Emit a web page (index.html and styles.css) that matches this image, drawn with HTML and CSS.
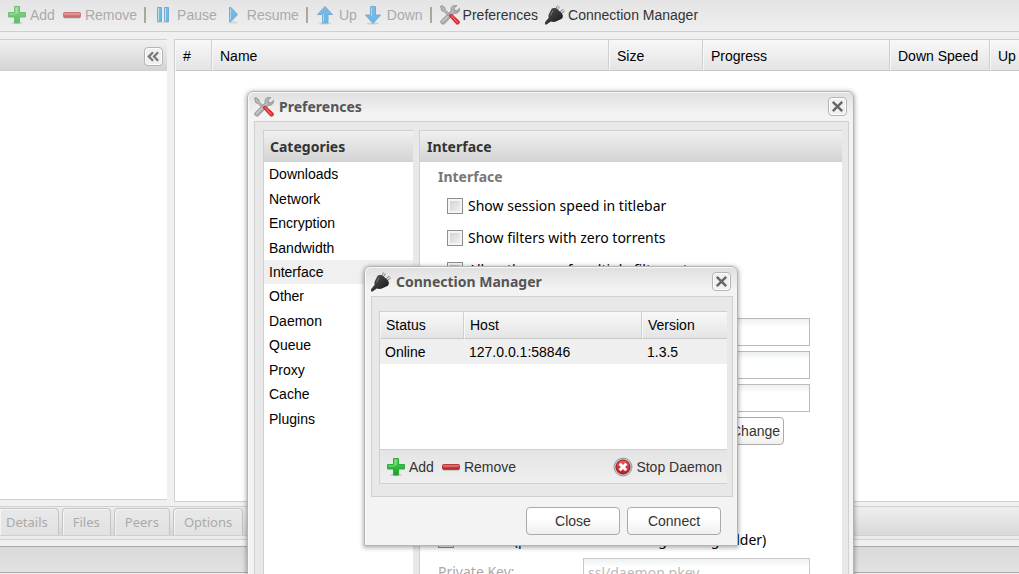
FILE: index.html
```html
<!DOCTYPE html>
<html lang="en">
<head>
    <meta charset="UTF-8">
    <meta name="viewport" content="width=device-width, initial-scale=1.0">
    <title>Deluge: Web UI</title>
    <link rel="stylesheet" href="styles.css">
</head>
<body>
    <!-- Shared icons -->
    <svg class="sprite" width="0" height="0" aria-hidden="true">
        <defs>
            <linearGradient id="green" x1="0" y1="0" x2="0" y2="1"><stop offset="0" stop-color="#5cd45c"/><stop offset="1" stop-color="#0fa31e"/></linearGradient>
            <linearGradient id="red" x1="0" y1="0" x2="0" y2="1"><stop offset="0" stop-color="#e2605c"/><stop offset="1" stop-color="#b01d22"/></linearGradient>
            <linearGradient id="blue" x1="0" y1="0" x2="0" y2="1"><stop offset="0" stop-color="#4aa3e0"/><stop offset="1" stop-color="#1f9be8"/></linearGradient>
            <linearGradient id="metal" x1="0" y1="0" x2="1" y2="1"><stop offset="0" stop-color="#cfcfcf"/><stop offset="1" stop-color="#8d8d8d"/></linearGradient>
            <linearGradient id="black" x1="0" y1="0" x2="1" y2="1"><stop offset="0" stop-color="#555"/><stop offset="1" stop-color="#151515"/></linearGradient>
        </defs>
        <symbol id="icon-add" viewBox="0 0 20 20">
            <ellipse cx="10" cy="18" rx="6" ry="1.2" fill="#000" opacity=".18"/>
            <path d="M7.5 1.5h5v6h6v4.500h-6v6h-5v-6h-6V7.500h6z" fill="url(#green)" stroke="#2faa3c"/>
            <path d="M8.500 2.500h2v6h-2zM2.500 8.500h6v1h-6z" fill="#9be89b" opacity=".7"/>
        </symbol>
        <symbol id="icon-remove" viewBox="0 0 20 20">
            <rect x="1.500" y="7.500" width="17" height="5" rx="1" fill="url(#red)" stroke="#b83a3d"/>
            <path d="M2.500 8.500h15v1h-15z" fill="#f09a96" opacity=".7"/>
            <path d="M2 13.500h16" stroke="#000" opacity=".12"/>
        </symbol>
        <symbol id="icon-pause" viewBox="0 0 20 20">
            <path d="M3.500 2.500h4v14h-4zM10.500 2.500h4v14h-4z" fill="url(#blue)" stroke="#3a8bc8"/>
            <path d="M4 3h1v13H4zM11 3h1v13h-1z" fill="#a8dcff"/>
            <path d="M3 17.500h12" stroke="#000" opacity=".15"/>
        </symbol>
        <symbol id="icon-resume" viewBox="0 0 20 20">
            <ellipse cx="9" cy="17.500" rx="5" ry="1" fill="#000" opacity=".15"/>
            <path d="M5.500 2.500h1.500l6.500 7-6.500 7H5.500z" fill="url(#blue)" stroke="#3a8bc8" stroke-linejoin="round"/>
            <path d="M6.500 4v11" stroke="#8fcdf5"/>
        </symbol>
        <symbol id="icon-up" viewBox="0 0 20 20">
            <ellipse cx="9" cy="18.500" rx="6" ry="1" fill="#000" opacity=".18"/>
            <path d="M9 1.500l7.500 8h-4.500v8.500H6.500V9.500h-5z" fill="url(#blue)" stroke="#3a8bc8" stroke-linejoin="round"/>
            <path d="M7.500 9v8" stroke="#8fcdf5"/>
        </symbol>
        <symbol id="icon-down" viewBox="0 0 20 20">
            <ellipse cx="9" cy="18.500" rx="6" ry="1" fill="#000" opacity=".18"/>
            <path d="M6.500 1.500h5v8.500h5L9 18.500 1.500 10h5z" fill="url(#blue)" stroke="#3a8bc8" stroke-linejoin="round"/>
            <path d="M7.500 2.500V11" stroke="#8fcdf5"/>
        </symbol>
        <symbol id="icon-tools" viewBox="0 0 20 20">
            <path d="M.5 1.200L1.800.500 5 2.800 5.200 4.800 11 10.500 9.500 12 3.800 6.200 2 6z" fill="#b9b9b9" stroke="#8a8a8a" stroke-width=".8"/>
            <path d="M13 .8c1.200-.6 2.800-.6 4-.2l-2.800 2.600.5 2.200 2.200.4L19.500 3.300c.5 3.200-1.800 5.400-5 5L4.500 18.700C3 20 0 18.500.7 16L11.200 5.800C10.600 3.500 11.200 1.700 13 .8z" fill="url(#metal)" stroke="#8f8f8f" stroke-width=".8"/>
            <path d="M2.300 17L13 6.500" stroke="#dcdcdc"/>
            <path d="M8.800 10.600l2.200-1.900 7.800 7c1.200 1.400 1 3.300-1.300 3.600-.6 0-1.200-.3-1.600-.8z" fill="#dd3034" stroke="#c43034" stroke-width=".8"/>
            <path d="M11 10.500l6.500 7" stroke="#f28a88"/>
        </symbol>
        <symbol id="icon-plug" viewBox="0 0 20 20">
            <path d="M11 5.500l2.500-4.500M14.500 8.500l4.500-3.500" stroke="#888" stroke-width="3"/>
            <path d="M11 5.500l2.500-4.500M14.500 8.500l4.500-3.500" stroke="#dedede" stroke-width="1.400"/>
            <path d="M6.800 3.600c1.600-1 4.200-.6 5.800.8l4 3.600c1.700 1.700 1.700 4.200.2 5.700l-5.300 2.600c-2 .9-4.300.7-5.700.2L1.500 19.500H0v-2.200l3.700-4.600c-.5-1.700-.1-3 .6-4.500z" fill="url(#black)"/>
            <path d="M5.500 10.500l2.500-5" stroke="#777"/>
        </symbol>
        <symbol id="icon-stop" viewBox="0 0 20 20">
            <circle cx="10" cy="10" r="9" fill="#c4c4c4" stroke="#9e9e9e"/>
            <circle cx="10" cy="10" r="7" fill="url(#red)" stroke="#a01820"/>
            <path d="M6.700 6.700l6.600 6.600M13.300 6.700l-6.600 6.600" stroke="#fff" stroke-width="3"/>
        </symbol>
        <symbol id="icon-close" viewBox="0 0 16 16">
            <path d="M3 3l10 10M13 3L3 13" stroke="#666" stroke-width="2.600"/>
        </symbol>
        <symbol id="icon-collapse" viewBox="0 0 16 16">
            <path d="M7.500 3.500L3 8l4.500 4.500M13 3.500L8.500 8l4.500 4.500" fill="none" stroke="#777" stroke-width="2.400"/>
        </symbol>
    </svg>

    <div class="desktop">
        <div class="toolbar">
            <button class="tool" disabled><svg><use href="#icon-add"/></svg>Add</button>
            <button class="tool" disabled><svg><use href="#icon-remove"/></svg>Remove</button>
            <span class="separator"></span>
            <button class="tool" disabled><svg><use href="#icon-pause"/></svg>Pause</button>
            <button class="tool" disabled><svg><use href="#icon-resume"/></svg>Resume</button>
            <span class="separator"></span>
            <button class="tool" disabled><svg><use href="#icon-up"/></svg>Up</button>
            <button class="tool" disabled><svg><use href="#icon-down"/></svg>Down</button>
            <span class="separator"></span>
            <button class="tool"><svg><use href="#icon-tools"/></svg>Preferences</button>
            <button class="tool"><svg><use href="#icon-plug"/></svg>Connection Manager</button>
        </div>

        <div class="main">
            <div class="sidebar">
                <div class="panel-header">
                    <button class="mini" aria-label="Collapse"><svg><use href="#icon-collapse"/></svg></button>
                </div>
            </div>
            <div class="torrents">
                <table class="grid torrent-grid">
                    <colgroup>
                        <col class="col-number"><col class="col-name"><col class="col-size">
                        <col class="col-progress"><col class="col-speed"><col>
                    </colgroup>
                    <thead>
                        <tr><th>#</th><th>Name</th><th>Size</th><th>Progress</th><th>Down Speed</th><th>Up</th></tr>
                    </thead>
                </table>
            </div>
        </div>

        <div class="details">
            <div class="tabs">
                <button class="tab" disabled>Details</button>
                <button class="tab" disabled>Files</button>
                <button class="tab" disabled>Peers</button>
                <button class="tab" disabled>Options</button>
            </div>
        </div>
        <div class="statusbar"></div>

        <!-- Preferences window -->
        <div class="window preferences">
            <div class="window-header">
                <svg><use href="#icon-tools"/></svg>
                <h2>Preferences</h2>
                <button class="mini" aria-label="Close"><svg><use href="#icon-close"/></svg></button>
            </div>
            <div class="window-body preferences-body">
                <div class="panel categories">
                    <h3 class="panel-header">Categories</h3>
                    <ul class="category-list">
                        <li>Downloads</li>
                        <li>Network</li>
                        <li>Encryption</li>
                        <li>Bandwidth</li>
                        <li class="selected">Interface</li>
                        <li>Other</li>
                        <li>Daemon</li>
                        <li>Queue</li>
                        <li>Proxy</li>
                        <li>Cache</li>
                        <li>Plugins</li>
                    </ul>
                </div>
                <div class="panel page">
                    <h3 class="panel-header">Interface</h3>
                    <form class="page-form">
                        <fieldset class="options">
                            <legend>Interface</legend>
                            <label class="check"><input type="checkbox">Show session speed in titlebar</label>
                            <label class="check"><input type="checkbox">Show filters with zero torrents</label>
                            <label class="check"><input type="checkbox" checked>Allow the use of multiple filters at once</label>
                        </fieldset>
                        <fieldset class="password">
                            <input class="text" type="password" aria-label="Old Password">
                            <input class="text" type="password" aria-label="New Password">
                            <input class="text" type="password" aria-label="Confirm Password">
                            <button class="button change" type="button">Change</button>
                        </fieldset>
                        <fieldset class="server">
                            <label class="check"><input type="checkbox">Use SSL (paths relative to Deluge config folder)</label>
                            <div class="field">
                                <label for="pkey">Private Key:</label>
                                <input class="text" type="text" id="pkey" value="ssl/daemon.pkey" disabled>
                            </div>
                        </fieldset>
                    </form>
                </div>
            </div>
        </div>

        <!-- Connection Manager window -->
        <div class="window connections">
            <div class="window-header">
                <svg><use href="#icon-plug"/></svg>
                <h2>Connection Manager</h2>
                <button class="mini" aria-label="Close"><svg><use href="#icon-close"/></svg></button>
            </div>
            <div class="window-body connections-body">
                <div class="panel hosts">
                    <table class="grid host-grid">
                        <colgroup><col class="col-status"><col class="col-host"><col></colgroup>
                        <thead>
                            <tr><th>Status</th><th>Host</th><th>Version</th></tr>
                        </thead>
                        <tbody>
                            <tr><td>Online</td><td>127.0.0.1:58846</td><td>1.3.5</td></tr>
                        </tbody>
                    </table>
                    <div class="host-tools">
                        <button class="tool"><svg><use href="#icon-add"/></svg>Add</button>
                        <button class="tool"><svg><use href="#icon-remove"/></svg>Remove</button>
                        <button class="tool last"><svg><use href="#icon-stop"/></svg>Stop Daemon</button>
                    </div>
                </div>
            </div>
            <div class="window-footer">
                <button class="button">Close</button>
                <button class="button">Connect</button>
            </div>
        </div>
    </div>
</body>
</html>
```
FILE: styles.css
```css
* {
    box-sizing: border-box;
}

body {
    margin: 0;
    font-family: "Liberation Sans", Arial, sans-serif;
    font-size: 14px;
    line-height: 16px;
    color: #000;
}

button, input {
    font: inherit;
}

svg {
    display: block;
    flex: none;
    width: 20px;
    height: 20px;
}

.sprite {
    position: absolute;
    width: 0;
    height: 0;
}

.desktop {
    position: relative;
    display: flex;
    flex-direction: column;
    height: 100vh;
    overflow: hidden;
    background: #f0f0f0;
}

/* toolbar */
.toolbar {
    display: flex;
    align-items: center;
    gap: 7px;
    height: 32px;
    padding: 0 7px 1px;
    border-bottom: 1px solid #d0d0d0;
    background: linear-gradient(#e4e4e4, #efefef);
}

.tool {
    display: flex;
    align-items: center;
    gap: 3px;
    padding: 0;
    border: 0;
    background: none;
    color: #333;
    white-space: nowrap;
}

.tool:disabled {
    color: #aaa;
}

.tool:disabled svg {
    opacity: 0.65;
}

.separator {
    width: 2px;
    height: 16px;
    margin-right: 1px;
    background: #aca899;
}

/* main area */
.main {
    display: flex;
    flex: 1;
    gap: 7px;
    min-height: 0;
    padding-top: 7px;
}

.sidebar {
    width: 167px;
    margin-bottom: 2px;
    border: solid #d0d0d0;
    border-width: 1px 0;
    background: #fff;
}

.panel-header {
    display: flex;
    align-items: center;
    height: 31px;
    margin: 0;
    padding: 2px 4px 0 6px;
    border-bottom: 1px solid #d0d0d0;
    background: linear-gradient(#f0f0f0, #d4d4d4);
    color: #333;
    font: bold 14px/18px "Noto Sans", Tahoma, sans-serif;
}

.mini {
    display: flex;
    align-items: center;
    justify-content: center;
    width: 19px;
    height: 19px;
    margin-left: auto;
    padding: 0;
    border: 1px solid #b4b4b4;
    border-radius: 4px;
    background: #f0f0f0;
    box-shadow: inset 0 0 0 1px #fff;
}

.mini svg {
    width: 15px;
    height: 15px;
}

.torrents {
    flex: 1;
    overflow: hidden;
    border: solid #d0d0d0;
    border-width: 1px 0 1px 1px;
    background: #fff;
}

.grid {
    table-layout: fixed;
    width: 100%;
    border-collapse: separate;
    border-spacing: 0;
}

.grid th {
    border-right: 1px solid #d0d0d0;
    border-bottom: 1px solid #c8c8c8;
    border-left: 1px solid #f8f8f8;
    background: linear-gradient(#f8f8f8, #e4e4e4);
    font-weight: normal;
    text-align: left;
    white-space: nowrap;
}

.grid th:last-child {
    border-right: 0;
}

.torrent-grid th {
    height: 31px;
    padding: 2px 0 0 7px;
}

.col-number {
    width: 37px;
}

.col-name {
    width: 397px;
}

.col-size {
    width: 94px;
}

.col-progress {
    width: 187px;
}

.col-speed {
    width: 100px;
}

/* details tabs and status bar */
.details {
    margin-top: 4px;
    padding-bottom: 3px;
    border: solid #d0d0d0;
    border-width: 1px 0;
    background: #ebebeb;
}

.tabs {
    display: flex;
    gap: 3px;
    padding-top: 1px;
    border-bottom: 1px solid #d0d0d0;
    background: linear-gradient(#eee, #d9d9d9);
}

.tab {
    height: 27px;
    padding: 0 10px;
    border: 1px solid #c4c4c4;
    border-bottom: 0;
    border-radius: 4px 4px 0 0;
    background: linear-gradient(#e8e8e8, #e2e2e2);
    box-shadow: inset 1px 1px #f4f4f4;
    color: #aaa;
    font: 13px/18px "Noto Sans", Tahoma, sans-serif;
}

.tab:first-child {
    padding-left: 6px;
    border-left: 0;
    border-top-left-radius: 0;
}

.statusbar {
    height: 27px;
    margin-top: 6px;
    margin-bottom: 1px;
    border: solid #aaa;
    border-width: 1px 0;
    background: linear-gradient(#d9d9d9, #e2e2e2);
}

/* windows */
.window {
    position: absolute;
    padding: 0 4px 0 6px;
    border: 1px solid #b4b4b4;
    border-radius: 6px 6px 0 0;
    background: linear-gradient(#dfdfdf, #f3f3f3 22px);
    box-shadow: inset 1px 1px #f8f8f8, 0 1px 4px 1px rgba(0, 0, 0, 0.3);
}

.window-header {
    display: flex;
    align-items: center;
    gap: 5px;
    height: 29px;
    padding-right: 2px;
}

.window-header h2 {
    margin: 0;
    color: #555;
    font: bold 14px/18px "Noto Sans", Tahoma, sans-serif;
}

.window-body {
    border: 1px solid #d0d0d0;
    background: #e8e8e8;
}

.panel {
    border: solid #d0d0d0;
    border-width: 1px 0 1px 1px;
    background: #fff;
}

.button {
    min-width: 94px;
    height: 28px;
    padding: 0 4px;
    border: 1px solid #aaa;
    border-radius: 4px;
    background: linear-gradient(#fff 40%, #efefef);
    color: #333;
}

/* preferences */
.preferences {
    top: 91px;
    left: 247px;
    width: 607px;
}

.preferences-body {
    display: flex;
    gap: 6px;
    min-height: 500px;
    padding: 8px 6px 8px 8px;
}

.categories {
    width: 150px;
}

.category-list {
    display: grid;
    grid-auto-rows: 1fr;
    height: 269px;
    margin: 0;
    padding: 0;
    list-style: none;
}

.category-list li {
    display: flex;
    align-items: center;
    padding-left: 5px;
}

.category-list .selected {
    background: #f0f0f0;
}

.page {
    flex: 1;
}

.page .panel-header {
    padding-left: 7px;
}

.page-form {
    padding: 6px 18px;
    font-family: "Noto Sans", Tahoma, sans-serif;
}

fieldset {
    margin: 0;
    padding: 0;
    border: 0;
}

legend {
    padding: 0;
    color: #777;
    font-weight: bold;
    line-height: 18px;
}

.options {
    display: grid;
    gap: 16px;
}

.options legend {
    margin-bottom: 12px;
}

.check {
    display: flex;
    align-items: center;
    gap: 5px;
    height: 16px;
    white-space: nowrap;
}

.options .check {
    padding-left: 9px;
}

.check input {
    appearance: none;
    width: 16px;
    height: 16px;
    margin: 0;
    border: 1px solid #8e8f8f;
    background: linear-gradient(135deg, #cbcfd5, #f6f6f6);
    box-shadow: inset 0 0 0 2px #f4f4f4;
}

.check input:checked {
    background: linear-gradient(135deg, #a9b4d8, #e6e9f6);
}

.text {
    width: 227px;
    height: 28px;
    padding: 0 4px;
    border: 1px solid #bbb;
    background: linear-gradient(#ecf0f1, #fff 8px);
}

.text:disabled {
    color: #aaa;
    opacity: 0.8;
}

.password {
    display: grid;
    gap: 5px;
    margin-top: 40px;
    padding-left: 145px;
}

.change {
    width: 58px;
    min-width: 0;
    margin-left: 143px;
    font-family: "Liberation Sans", Arial, sans-serif;
}

.server {
    margin-top: 87px;
}

.field {
    display: flex;
    align-items: center;
    justify-content: space-between;
    margin-top: 10px;
    padding-right: 14px;
    color: #aaa;
}

/* connection manager */
.connections {
    top: 266px;
    left: 364px;
    width: 374px;
}

.connections-body {
    padding: 14px 5px 12px 7px;
}

.hosts {
    display: flex;
    flex-direction: column;
    height: 173px;
}

.host-grid th {
    height: 27px;
    padding: 0 5px;
}

.host-grid td {
    height: 25px;
    padding: 0 5px;
    background: #efefef;
}

.col-status {
    width: 84px;
}

.col-host {
    width: 178px;
}

.host-tools {
    display: flex;
    align-items: center;
    gap: 7px;
    height: 34px;
    margin-top: auto;
    padding: 0 5px 0 6px;
    border-top: 1px solid #d0d0d0;
    background: linear-gradient(#e4e4e4, #efefef);
}

.last {
    margin-left: auto;
}

.window-footer {
    display: flex;
    justify-content: flex-end;
    gap: 7px;
    padding: 10px 12px 10px 0;
}
```
